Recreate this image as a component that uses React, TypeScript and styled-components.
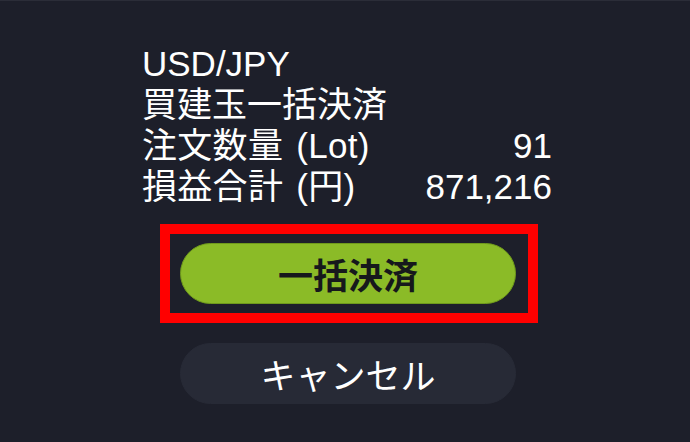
import React from "react";
import styled, { createGlobalStyle } from "styled-components";

const GlobalStyle = createGlobalStyle`
    html, body {
        margin: 0;
        padding: 0;
        background: #1d1f2a;
    }
    body {
        font-family: "Liberation Sans", "Noto Sans CJK JP", sans-serif;
        color: #ffffff;
    }
`;

const Screen = styled.div`
    width: 690px;
    height: 442px;
    box-sizing: border-box;
    border-top: 1px solid #2b2d38;
    background: #1d1f2a;
    padding-top: 42px;
    display: flex;
    flex-direction: column;
`;

const Info = styled.div`
    margin-left: 142px;
    width: 410px;
    font-size: 35px;
    line-height: 41px;
`;

const Row = styled.div`
    display: flex;
    justify-content: space-between;
    white-space: nowrap;
    word-spacing: 3px;
`;

const Label = styled.span`
    letter-spacing: 0.3px;
`;

const Value = styled.span`
    text-align: right;
`;

const Highlight = styled.div`
    margin: 17px 0 0 160px;
    width: 378px;
    height: 99px;
    box-sizing: border-box;
    border: 10px solid #ff0000;
    padding: 9px 12px 0 10px;
`;

const Button = styled.button<{ $primary?: boolean }>`
    display: flex;
    align-items: center;
    justify-content: center;
    width: 336px;
    height: 61px;
    border-radius: 31px;
    box-sizing: border-box;
    padding: 0;
    border: 1px solid ${props => (props.$primary ? "#6f9a1c" : "#272a36")};
    background: ${props => (props.$primary ? "#8bbb27" : "#272a36")};
    color: ${props => (props.$primary ? "#16181c" : "#ffffff")};
    font-family: "Liberation Sans", "Noto Sans CJK JP", sans-serif;
    font-size: 35px;
    font-weight: ${props => (props.$primary ? 700 : 400)};
`;

const CancelButton = styled(Button)`
    margin: 20px 0 0 180px;
`;

const App: React.FC = () => {
    return (
        <>
            <GlobalStyle />
            <Screen>
                <Info>
                    <Row>USD/JPY</Row>
                    <Row>買建玉一括決済</Row>
                    <Row>
                        <Label>注文数量 (Lot)</Label>
                        <Value>91</Value>
                    </Row>
                    <Row>
                        <Label>損益合計 (円)</Label>
                        <Value>871,216</Value>
                    </Row>
                </Info>
                <Highlight>
                    <Button $primary>一括決済</Button>
                </Highlight>
                <CancelButton>キャンセル</CancelButton>
            </Screen>
        </>
    );
};

export default App;
